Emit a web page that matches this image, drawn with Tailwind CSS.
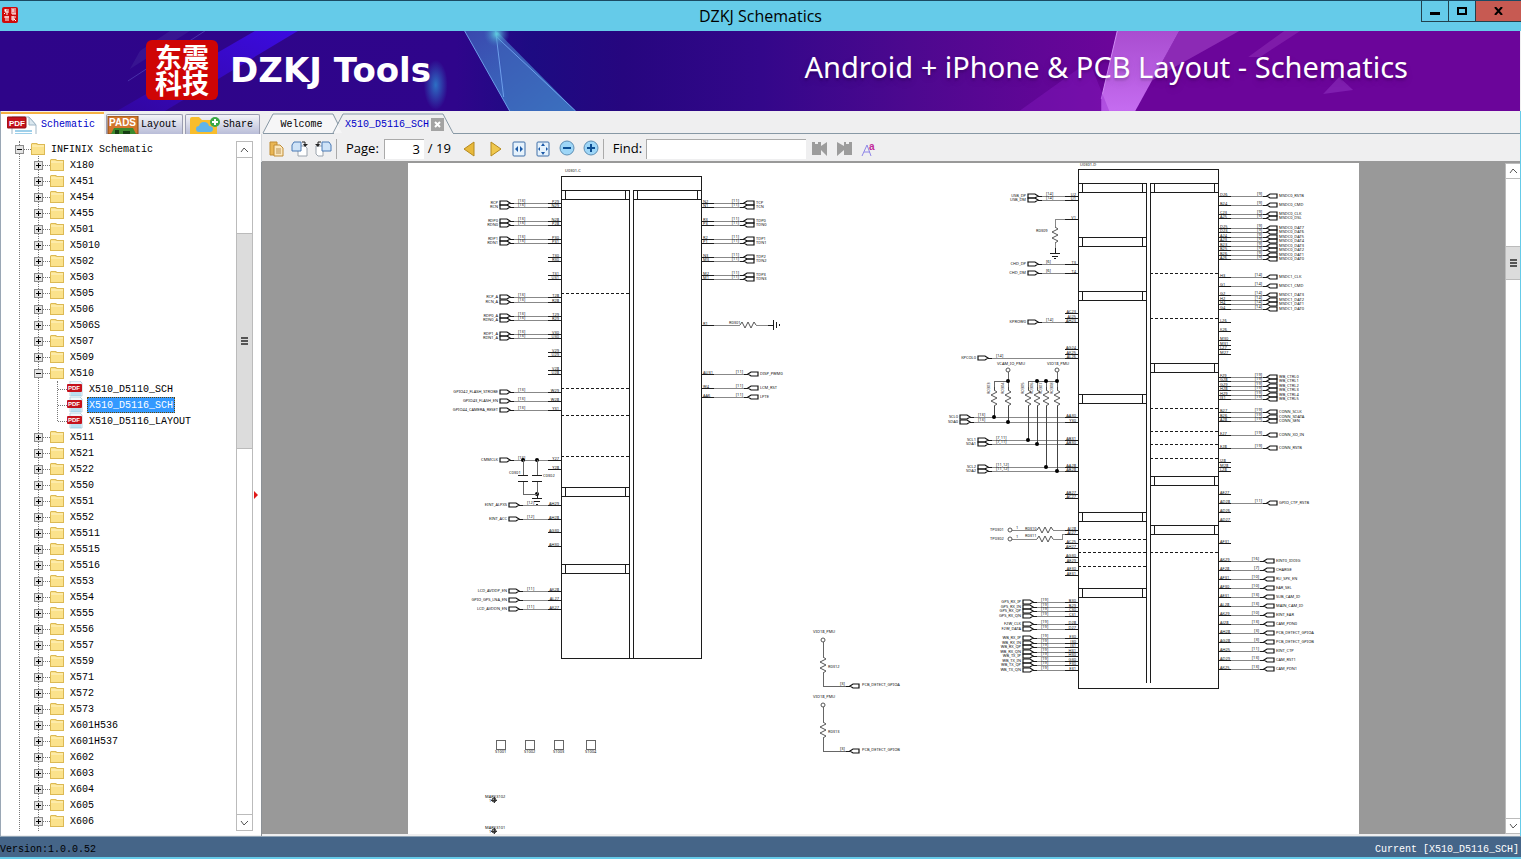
<!DOCTYPE html>
<html lang="en">
<head>
    <meta charset="UTF-8">
    <meta name="viewport" content="width=device-width, initial-scale=1.0">
    <title>DZKJ Schematics</title>
    <script src="https://cdn.jsdelivr.net/npm/@tailwindcss/browser@4"></script>
</head>
<body class="h-screen flex flex-col overflow-hidden bg-[#efeff0] text-black font-['Liberation_Mono',monospace] text-[10px]">

    <!-- Title bar -->
    <header class="relative h-[31px] shrink-0 flex items-center justify-center bg-[#65cbe9] border-t border-[#1b4a63]">
        <svg class="absolute left-[2px] top-[6px]" width="16" height="16" viewBox="0 0 16 16">
            <rect width="16" height="16" rx="2" fill="#cf0a0a"/>
            <path d="M2 3h5M4 2L3 5h4M5 4v4M3 6l-1 1M9 2h5M9 4h5M11 2v3M9 6h5M10 7h4M2 10h5M4 9v5M6 9v5M9 10h5M11 9v5M9 12h4M12 12l2 2" stroke="#fff" fill="none"/>
        </svg>
        <h1 class="font-['Open_Sans',sans-serif] text-[16px] leading-5 pb-px">DZKJ Schematics</h1>
        <div class="absolute right-0 top-0 flex h-[21px] border-b border-l border-[#22404c]">
            <button aria-label="Minimize" class="w-[27px] flex items-center justify-center border-r border-[#22404c]">
                <svg width="10" height="10"><rect y="6" width="10" height="3"/></svg>
            </button>
            <button aria-label="Maximize" class="w-[27px] flex items-center justify-center border-r border-[#22404c]">
                <svg width="10" height="8"><rect x="1" y="1" width="8" height="6" fill="none" stroke="#000" stroke-width="2"/></svg>
            </button>
            <button aria-label="Close" class="w-[45px] flex items-center justify-center bg-[#c75a52]">
                <svg width="9" height="8" viewBox="0 0 9 8"><path d="M1 0l7 8M8 0L1 8" stroke="#000" stroke-width="2"/></svg>
            </button>
        </div>
    </header>

    <!-- Banner -->
    <div class="relative h-20 shrink-0 flex items-center justify-between pl-[146px] pr-[112px] mr-px overflow-hidden text-white font-['Open_Sans',sans-serif]">
        <svg class="absolute inset-0 w-full h-full" viewBox="0 0 1521 80" preserveAspectRatio="none">
            <defs>
                <linearGradient id="bg">
                    <stop offset="0" stop-color="#2e0589"/>
                    <stop offset=".3" stop-color="#2f058b"/>
                    <stop offset=".35" stop-color="#1d0b82"/>
                    <stop offset=".41" stop-color="#26067f"/>
                    <stop offset=".5" stop-color="#33078a"/>
                    <stop offset=".6" stop-color="#4d088f"/>
                    <stop offset=".73" stop-color="#6b059a"/>
                    <stop offset="1" stop-color="#6b059a"/>
                </linearGradient>
                <linearGradient id="shard" x1="0" y1="0" x2="1" y2="1">
                    <stop offset="0" stop-color="#3a48ae"/>
                    <stop offset="1" stop-color="#3b7cc6"/>
                </linearGradient>
                <linearGradient id="pink" x1="0" y1="0" x2="0" y2="1">
                    <stop offset="0" stop-color="#a94dd0"/>
                    <stop offset="1" stop-color="#c56cf0"/>
                </linearGradient>
                <linearGradient id="beam" x1="1" y1="0" x2="0" y2="1">
                    <stop offset="0" stop-color="#3b0be0"/>
                    <stop offset="1" stop-color="#3206a0"/>
                </linearGradient>
                <radialGradient id="glow">
                    <stop offset="0" stop-color="#2d6fc4"/>
                    <stop offset="1" stop-color="#2d6fc4" stop-opacity="0"/>
                </radialGradient>
                <radialGradient id="spark">
                    <stop offset="0" stop-color="#5fd0e0"/>
                    <stop offset="1" stop-color="#3f70c0" stop-opacity="0"/>
                </radialGradient>
            </defs>
            <rect width="1521" height="80" fill="url(#bg)"/>
            <path d="M255 0h43L165 80h-48z" fill="url(#beam)"/>
            <path d="M128 50L205 0" stroke="#5b4fc0" opacity=".6"/>
            <path d="M140 20l30-20h20l-60 38z" fill="#452a9c" opacity=".4"/>
            <ellipse cx="436" cy="54" rx="12" ry="25" fill="url(#glow)"/>
            <path d="M465 0h32l79 80h-66z" fill="url(#shard)"/>
            <path d="M497 6l12 72 6 2h61z" fill="#3c63b8" opacity=".5"/>
            <path d="M465 0l45 80M496 0l8 66M496 5l80 75" stroke="#6d9fea" fill="none"/>
            <circle cx="497" cy="3" r="13" fill="url(#spark)"/>
            <path d="M1118 0h62l-44 80h-34v-12z" fill="url(#pink)"/>
            <path d="M1180 0h60l-68 38-20 12z" fill="#9a3bc0" opacity=".7"/>
            <path d="M1285 0h16l-40 26h-12z" fill="#9a3bc0" opacity=".4"/>
            <path d="M1340 46l14 13-30 4z" fill="#8c2fbe" opacity=".6"/>
            <path d="M1118 0l-16 68" stroke="#d08cf5"/>
            <path d="M1020 80l70-50 20 50z" fill="#8d20c8" opacity=".35"/>
        </svg>
        <div class="relative flex items-center gap-3 pb-[2px]">
            <div class="w-[72px] h-[60px] rounded-md bg-[#cf0505] flex flex-col items-center justify-center font-['Noto_Sans_CJK_SC',sans-serif] font-bold text-[27px] leading-[26px]">
                <p>东震<br>科技</p>
            </div>
            <strong class="font-['DejaVu_Sans',sans-serif] text-[34px] leading-[40px]">DZKJ Tools</strong>
        </div>
        <p class="relative pb-2 text-[29px] leading-[40px] whitespace-nowrap font-['Noto_Sans',sans-serif] text-shadow-lg">Android + iPhone &amp; PCB Layout - Schematics</p>
    </div>

    <main class="flex-1 min-h-0 flex border-r border-[#65cbe9]">

        <!-- Library -->
        <aside class="w-[262px] shrink-0 flex flex-col border-l border-[#9aa7b5]">
            <nav class="h-[23px] shrink-0 flex items-end gap-[2px] pt-px">
                <button class="w-[103px] h-full flex items-center gap-1 pl-[6px] bg-white border-t-2 border-[#f5b042] text-[#0000c8]">
                    <svg width="30" height="19" viewBox="0 0 30 19">
                        <path d="M5 19V2h17l7 8v9" fill="#fff" stroke="#9fb6c6"/>
                        <path d="M22 2v8h7z" fill="#dbe8ef" stroke="#9fb6c6"/>
                        <path d="M8 16h17M8 19h17" stroke="#9fd0ea" stroke-width="2"/>
                        <rect y="2" width="19" height="11" rx="1" fill="#c5121c" stroke="#8e0a12"/>
                        <text x="2" y="11" font-size="8" font-weight="700" fill="#fff" font-family="Liberation Sans">PDF</text>
                    </svg>
                    Schematic
                </button>
                <button class="w-[77px] h-5 flex items-center gap-[2px] border border-b-0 border-[#9a9cb0] rounded-t-xs bg-linear-to-b from-[#f4f4f8] to-[#b9bdd8]">
                    <svg width="32" height="18" viewBox="0 0 32 18">
                        <rect x="1" width="30" height="18" fill="#d3762d" stroke="#8a4a14"/>
                        <text x="2" y="10" font-size="10" font-weight="700" fill="#fff" font-family="Liberation Sans">PADS</text>
                        <path d="M4 18l3-6h19l3 6z" fill="#3c8a2e"/>
                        <path d="M8 18v-4h4v4M16 18v-3h7v3" fill="#173f14"/>
                    </svg>
                    Layout
                </button>
                <button class="w-[75px] h-5 flex items-center gap-[2px] pl-[3px] border border-b-0 border-[#9a9cb0] rounded-t-xs bg-linear-to-b from-[#f4f4f8] to-[#b9bdd8]">
                    <svg width="32" height="18" viewBox="0 0 32 18">
                        <path d="M1 18V3q0-2 2-2h7l3 3h15v14z" fill="#f8bd2c"/>
                        <path d="M10 16q-3 0-3-3t3-3q1-4 5-4t5 4q4 0 4 3t-3 3z" fill="#5fb4ea"/>
                        <circle cx="26" cy="6" r="5" fill="#3aa845"/>
                        <path d="M26 3v6M23 6h6" stroke="#fff" stroke-width="2"/>
                    </svg>
                    Share
                </button>
            </nav>
            <div class="flex-1 min-h-0 flex bg-white border-r border-[#d5d9dd] pt-[7px] pb-1 mb-px">
                <div class="relative flex-1 overflow-hidden">
                    <div class="absolute left-[18px] inset-y-0 border-l border-dotted border-[#777]"></div>
                    <div class="absolute left-[37px] top-3 bottom-0 border-l border-dotted border-[#777]"></div>
                    <ul id="tree" class="relative"></ul>
                </div>
                <div class="w-[17px] flex flex-col border border-[#bbb] mr-2">
                    <button aria-label="Scroll up" class="h-4 shrink-0 flex items-center justify-center border-b border-[#bbb]"><svg width="9" height="6"><path d="M1 5l3-4 4 4" fill="none" stroke="#555" stroke-width="1"/></svg></button>
                    <div class="h-[75px]"></div>
                    <div class="h-[216px] flex items-center justify-center bg-[#dcdcdc] border-y border-[#bbb]"><svg width="7" height="8" shape-rendering="crispEdges"><path d="M0 1h7M0 4h7M0 7h7" stroke="#555" stroke-width="2"/></svg></div>
                    <button aria-label="Scroll down" class="mt-auto h-4 shrink-0 flex items-center justify-center border-t border-[#bbb]"><svg width="9" height="6"><path d="M1 1l3 4 4-4" fill="none" stroke="#555" stroke-width="1"/></svg></button>
                </div>
            </div>
        </aside>

        <!-- Document -->
        <section class="relative flex-1 min-w-0 flex flex-col">
            <nav class="relative h-[23px] shrink-0 flex items-end bg-[#efeff0]">
                <svg class="absolute inset-0 w-full h-full">
                    <path d="M80 22L70 3H11L1 22z" fill="#f6f6f7"/>
                    <path d="M1 22L11 3h60l5 10M71 22L81 3h100l10 19" fill="none" stroke="#8798a5"/>
                    <path d="M1 22.5h71M191 22.5h3000" stroke="#8798a5"/>
                </svg>
                <button class="relative w-[79px] h-5">Welcome</button>
                <div class="relative h-5 flex items-center gap-[2px] pl-1">
                    <button class="text-[#0000c8]">X510_D5116_SCH</button>
                    <button aria-label="Close tab" class="size-[13px] bg-[#a3a3a3] flex items-center justify-center"><svg width="7" height="7"><path d="M1 1l5 5M6 1L1 6" stroke="#fff" stroke-width="2"/></svg></button>
                </div>
            </nav>

            <div class="h-[29px] shrink-0 flex items-center border-b-2 border-[#999] pl-[7px] pt-[2px] font-['Open_Sans',sans-serif] text-[13px]">
                <button aria-label="Save as" class="w-[15px]">
                    <svg width="15" height="16" viewBox="0 0 15 16"><path d="M1 1h7v13H1z" fill="#e9b654" stroke="#c08c35"/><path d="M5 4h6l3 3v8H5z" fill="#fbe7bd" stroke="#c08c35"/><path d="M7 8h5M7 10h5M7 12h5" stroke="#b99254"/></svg>
                </button>
                <button aria-label="Rotate right" class="ml-[7px]">
                    <svg width="17" height="16" viewBox="0 0 17 16"><path d="M7 5h7l2 2v8H7z" fill="#fff" stroke="#9aa3ad"/><path d="M1 4l2-3h7v9H1z" fill="#cfe3f7" stroke="#4a7ab5"/><path d="M11 1h3v2" fill="none" stroke="#222"/><path d="M12 3h5l-3 3z" fill="#222"/></svg>
                </button>
                <button aria-label="Rotate left" class="ml-[7px]">
                    <svg width="17" height="16" viewBox="0 0 17 16"><path d="M1 5h7v10H3l-2-2z" fill="#fff" stroke="#9aa3ad"/><path d="M7 1h7l2 3v6H7z" fill="#cfe3f7" stroke="#4a7ab5"/><path d="M6 1H3v2" fill="none" stroke="#222"/><path d="M0 3h5L3 6z" fill="#222"/></svg>
                </button>
                <span class="w-px h-5 bg-[#aaa] ml-1"></span>
                <label for="page" class="ml-[9px]">Page:</label>
                <input id="page" value="3" class="ml-[5px] w-[40px] h-5 bg-white border-t border-l border-[#aaa] text-right pr-1">
                <span class="ml-1 w-[31px] whitespace-nowrap">/ 19</span>
                <button aria-label="Previous page" class="ml-1"><svg width="12" height="16" viewBox="0 0 12 16"><path d="M11 1v14L1 8z" fill="#e8b93c" stroke="#b58a1e"/></svg></button>
                <button aria-label="Next page" class="ml-[15px]"><svg width="12" height="16" viewBox="0 0 12 16"><path d="M1 1v14l10-7z" fill="#f0c84e" stroke="#b58a1e"/></svg></button>
                <button aria-label="Fit width" class="ml-[10px]">
                    <svg width="14" height="16" viewBox="0 0 14 16"><rect x="1" y="1" width="12" height="14" rx="1" fill="#e6f2fc" stroke="#3f6ea8"/><path d="M6 5v6L3 8zM8 5v6l3-3z" fill="#1c5aa8"/></svg>
                </button>
                <button aria-label="Fit page" class="ml-[10px]">
                    <svg width="14" height="16" viewBox="0 0 14 16"><rect x="1" y="1" width="12" height="14" rx="1" fill="#e6f2fc" stroke="#3f6ea8"/><path d="M5 5h4L7 2zM5 11h4l-2 3zM4 6v4L2 8zM10 6v4l2-2z" fill="#1c5aa8"/></svg>
                </button>
                <button aria-label="Zoom out" class="ml-[9px]"><svg width="17" height="17" viewBox="0 0 17 17"><circle cx="8" cy="8" r="7" fill="#9ed6f7" stroke="#5f8fb5"/><path d="M4 8h8" stroke="#0d4f94" stroke-width="2"/></svg></button>
                <button aria-label="Zoom in" class="ml-[7px]"><svg width="17" height="17" viewBox="0 0 17 17"><circle cx="8" cy="8" r="7" fill="#9ed6f7" stroke="#5f8fb5"/><path d="M4 8h8M8 4v8" stroke="#0d4f94" stroke-width="2"/></svg></button>
                <span class="w-px h-5 bg-[#aaa] ml-[3px]"></span>
                <label for="find" class="ml-[9px]">Find:</label>
                <input id="find" class="ml-[4px] w-[160px] h-5 bg-white border-t border-l border-[#aaa]">
                <button aria-label="Find previous" class="ml-[6px]"><svg width="16" height="15" viewBox="0 0 16 15"><path d="M0 1h3v2h3V1h3v4l6-4v14L9 9v5H0z" fill="#9c9c9c"/></svg></button>
                <button aria-label="Find next" class="ml-[9px]"><svg width="16" height="15" viewBox="0 0 16 15"><path d="M15 1h-3v2H9V1H7v4L0 1v14l7-6v5h8z" fill="#9c9c9c"/></svg></button>
                <button aria-label="Match case" class="ml-2"><svg width="16" height="16" viewBox="0 0 16 16"><path d="M1 15L6 4l4 11M3 11h6" fill="none" stroke="#8f86e8" stroke-width="1"/><text x="8" y="9" font-size="10" fill="#c22a9a" font-family="Liberation Sans" font-weight="700">a</text></svg></button>
            </div>

            <div class="flex-1 min-h-0 flex bg-white mb-[2px]">
                <div class="flex-1 flex justify-center bg-[#999] overflow-hidden">
                    <div class="bg-white h-full shrink-0">
                        <svg id="sheet" width="951" height="671" viewBox="408 163 951 671" font-family="Noto Sans, sans-serif" font-size="4" fill="#111" shape-rendering="crispEdges"></svg>
                    </div>
                </div>
                <div class="w-[15px] shrink-0 flex flex-col border border-[#bbb] border-r-0">
                    <button aria-label="Page up" class="h-[15px] flex items-center justify-center border-b border-[#bbb]"><svg width="9" height="6"><path d="M1 5l3-4 4 4" fill="none" stroke="#555" stroke-width="1"/></svg></button>
                    <div class="h-[67px]"></div>
                    <div class="h-[34px] flex items-center justify-center bg-[#dcdcdc] border-y border-[#bbb]"><svg width="7" height="8" shape-rendering="crispEdges"><path d="M0 1h7M0 4h7M0 7h7" stroke="#555" stroke-width="2"/></svg></div>
                    <button aria-label="Page down" class="mt-auto h-[15px] flex items-center justify-center border-t border-[#bbb]"><svg width="9" height="6"><path d="M1 1l3 4 4-4" fill="none" stroke="#555" stroke-width="1"/></svg></button>
                </div>
            </div>

            <!-- Splitter handle and edge -->
            <div class="absolute -left-px top-[51px] bottom-0 border-l border-[#8c9196]"></div>
            <svg class="absolute -left-[9px] top-[379px]" width="6" height="10"><path d="M1 1v8l4-4z" fill="#e01818"/></svg>
        </section>
    </main>

    <!-- Status bar -->
    <footer class="h-[23px] shrink-0 flex items-center justify-between border-t border-b-2 border-t-[#8fa3b5] border-b-[#65cbe9] bg-[#456588] pr-[2px] pt-[5px]">
        <span>Version:1.0.0.52</span>
        <span class="text-white">Current [X510_D5116_SCH]</span>
    </footer>

    <script>
        // Library tree: models at the second level, X510 is open
        const models = [
            'X180', 'X451', 'X454', 'X455', 'X501', 'X5010', 'X502', 'X503', 'X505', 'X506', 'X506S', 'X507', 'X509', 'X510',
            'X511', 'X521', 'X522', 'X550', 'X551', 'X552', 'X5511', 'X5515', 'X5516', 'X553', 'X554', 'X555', 'X556', 'X557',
            'X559', 'X571', 'X572', 'X573', 'X601H536', 'X601H537', 'X602', 'X603', 'X604', 'X605', 'X606', ''
        ];
        const files = ['X510_D5110_SCH', 'X510_D5116_SCH', 'X510_D5116_LAYOUT'];
        const selected = 'X510_D5116_SCH';

        const toggle = open => `<svg class="shrink-0" width="9" height="9" shape-rendering="crispEdges"><rect width="9" height="9" fill="#8c8c8c"/><rect x="1" y="1" width="7" height="7" fill="#e4e4e4"/><rect x="2" y="4" width="5" height="1" fill="#000"/>${open ? '' : '<rect x="4" y="2" width="1" height="5" fill="#000"/>'}</svg>`;
        const dots = w => `<span class="${w} shrink-0 border-t border-dotted border-[#777]"></span>`;
        const folder = '<svg class="shrink-0" width="14" height="12" viewBox="0 0 14 12"><path d="M0 12V1l1-1h5l1 1h7v11z" fill="#dcb954"/><path d="M1 11V1h4l2 1h6v9z" fill="#fbe28c"/><path d="M1 3h12" stroke="#fff4c8"/></svg>';
        const pdf = '<svg class="shrink-0" width="16" height="16" viewBox="0 0 16 16"><path d="M3 0h10l2 2v13H3z" fill="#eef7fb" stroke="#b9d4e2"/><path d="M4 12h10M4 14h10" stroke="#86c5e4"/><rect y="3" width="15" height="8" rx="1" fill="#c5121c"/><text x="1" y="9" font-size="6" font-weight="700" fill="#fff" font-family="Liberation Sans">PDF</text></svg>';

        const row = (pad, parts, name) => {
            const mark = name === selected ? 'bg-[#3399ff] text-white outline-1 -outline-offset-1 outline-dotted outline-[#664400]' : '';
            return `<li class="h-4 flex items-center ${pad}">${parts}<span class="ml-1 px-[2px] pt-px h-4 leading-[15px] whitespace-nowrap ${mark}">${name}</span></li>`;
        };

        let html = row('pl-[14px]', toggle(true) + dots('w-[7px]') + folder, 'INFINIX Schematic');
        models.forEach(name => {
            html += row('pl-[33px]', toggle(name === 'X510') + dots('w-[7px]') + folder, name);
            if (name === 'X510') {
                html += '<li><ul class="relative"><li class="absolute left-[56px] top-0 h-10 border-l border-dotted border-[#777]"></li>';
                files.forEach(file => { html += row('pl-[57px]', dots('w-[9px]') + pdf, file); });
                html += '</ul></li>';
            }
        });
        document.getElementById('tree').innerHTML = html;

        // Schematic sheet
        const out = [];
        const line = (d, color = '#888', w = 1) => out.push(`<path d="${d}" fill="none" stroke="${color}" stroke-width="${w}"/>`);
        const label = (x, y, s, anchor = 'start') => out.push(`<text x="${x}" y="${y}" text-anchor="${anchor}">${s}</text>`);
        const dot = (x, y) => out.push(`<circle cx="${x}" cy="${y}" r="2" fill="#000" shape-rendering="auto"/>`);
        const ring = (x, y) => out.push(`<circle cx="${x}" cy="${y}" r="2" fill="#fff" stroke="#555" stroke-width="1" shape-rendering="auto"/>`);
        const port = d => out.push(`<path d="${d}" fill="none" stroke="#111" stroke-width="1.2" shape-rendering="auto"/>`);
        const INK = '#1c1c1c';

        // Bars are the boxed section titles, dashes the section dividers
        function column(x1, x2, bars, dashes) {
            bars.forEach(y => line(`M${x1} ${y}H${x2}V${y + 9}H${x1}zM${x1 + 4} ${y}v9M${x2 - 4} ${y}v9`, INK));
            dashes.forEach(y => out.push(`<path d="M${x1} ${y}H${x2}" stroke="${INK}" stroke-dasharray="3 2"/>`));
        }

        // Left-hand rows: port points right, wire runs to the chip edge
        function leftRows(edge, rows) {
            rows.forEach(([y, pin, px, name, ref]) => {
                line(`M${edge - 13} ${y}H${edge}`, INK);
                label(edge - 2, y, pin, 'end');
                if (!name) return;
                line(`M${px + 14} ${y}H${edge - 13}`);
                line(`M${px + 10} ${y}h4`, INK);
                port(`M${px} ${y - 2}h7l3 2l-3 2h-7z`);
                label(px - 2, y + 1, name, 'end');
                label(px + 18, y - 1, ref);
            });
        }

        // Right-hand rows mirror them
        function rightRows(edge, rows) {
            rows.forEach(([y, pin, px, name, ref]) => {
                line(`M${edge} ${y}h13`, INK);
                label(edge + 2, y, pin);
                if (!name) return;
                line(`M${edge + 13} ${y}H${px - 4}`);
                line(`M${px} ${y}h-4`, INK);
                port(`M${px + 10} ${y - 2}h-7l-3 2l3 2h7z`);
                label(px + 12, y + 1, name);
                label(px - 5, y - 1, ref, 'end');
            });
        }

        const zigV = (x, y) => out.push(`<path d="M${x} ${y}l3 2l-6 3l6 3l-6 3l6 3l-3 2" fill="none" stroke="#555" shape-rendering="auto"/>`);
        const zigH = (x, y) => out.push(`<path d="M${x} ${y}l2 -3l3 6l3 -6l3 6l3 -6l2 3" fill="none" stroke="#555" shape-rendering="auto"/>`);

        // Chip C
        label(565, 172, 'U0301-C');
        line('M561 176H701V658H561z', INK);
        line('M629 190V658M633 190V658', INK);
        column(561, 629, [190, 487, 564], [293, 388, 415, 456]);
        column(633, 701, [190], []);
        leftRows(561, [
            [203, 'P29', 500, 'RCP', '[13]'], [207, 'N29', 500, 'RCN', '[13]'],
            [221, 'N28', 500, 'RDP0', '[13]'], [225, 'P28', 500, 'RDN0', '[13]'],
            [239, 'P30', 500, 'RDP1', '[13]'], [243, 'P31', 500, 'RDN1', '[13]'],
            [257, 'T30'], [261, 'R30'], [275, 'T31'], [279, 'U31'],
            [297, 'T28', 500, 'RCP_A', '[13]'], [302, 'R28', 500, 'RCN_A', '[13]'],
            [316, 'T29', 500, 'RDP0_A', '[13]'], [320, 'R29', 500, 'RDN0_A', '[13]'],
            [334, 'V30', 500, 'RDP1_A', '[13]'], [338, 'U30', 500, 'RDN1_A', '[13]'],
            [352, 'V29'], [356, 'U29'], [370, 'V28'], [374, 'U28'],
            [392, 'W29', 500, 'GPIO42_FLASH_STROBE', '[13]'], [401, 'W28', 500, 'GPIO43_FLASH_EN', '[13]'], [410, 'Y31', 500, 'GPIO44_CAMERA_RESET', '[13]'],
            [460, 'Y27', 500, 'CMMCLK', '[13]'], [469, 'Y28'],
            [505, 'AH29', 509, 'EINT_ALPXS', '[12]'], [519, 'AH28', 509, 'EINT_ACC', '[12]'],
            [532, 'AG30'], [546, 'AH30'],
            [591, 'AK28', 509, 'LCD_AVDDP_EN', '[11]'], [600, 'AL27', 509, 'GPIO_GPS_LNA_EN', ''], [609, 'AK27', 509, 'LCD_AVDDN_EN', '[11]']
        ]);
        rightRows(701, [
            [203, 'N2', 744, 'TCP', '[11]'], [207, 'N1', 744, 'TCN', '[11]'],
            [221, 'R3', 744, 'TDP0', '[11]'], [225, 'P3', 744, 'TDN0', '[11]'],
            [239, 'R2', 744, 'TDP1', '[11]'], [243, 'P1', 744, 'TDN1', '[11]'],
            [257, 'N3', 744, 'TDP2', '[11]'], [261, 'M3', 744, 'TDN2', '[11]'],
            [275, 'M2', 744, 'TDP3', '[11]'], [279, 'M1', 744, 'TDN3', '[11]'],
            [325, 'R1'],
            [374, 'AU31', 748, 'DISP_PWM0', '[11]'], [388, 'W4', 748, 'LCM_RST', '[11]'], [397, 'AA6', 748, 'LPTE', '[11]']
        ]);
        line('M714 325H740M756 325H768');
        zigH(740, 325);
        line('M768 325h5M773 320v10M776 322v6M779 324v2', INK);
        label(729, 324, 'R0301');
        dot(523, 460);
        dot(537, 460);
        dot(537, 494);
        line('M523 460V475M537 460V475M523 481V494H537M537 481V494', '#666');
        line('M518 475h10M518 481h10M532 475h10M532 481h10M537 494v4M532 498h10M534 501h6M536 504h2', INK);
        label(509, 474, 'C0301');
        label(543, 477, 'C0302');

        // Chip D
        label(1080, 166, 'U0301-D');
        line('M1078 169H1218V688H1078z', INK);
        line('M1146 183V683M1150 183V683', INK);
        column(1078, 1146, [183, 237, 291, 394, 512, 588], [539, 552, 566]);
        column(1150, 1218, [183, 363, 476, 525], [273, 318, 408, 431, 444, 458, 552]);
        leftRows(1078, [
            [196, 'U2', 1028, 'USB_DP', '[14]'], [200, 'U1', 1028, 'USB_DM', '[14]'], [219, 'V1'],
            [264, 'T3', 1028, 'CHD_DP', '[6]'], [273, 'T4', 1028, 'CHD_DM', '[6]'],
            [313, 'AC23'], [318, 'AJ25'], [322, 'AH23', 1028, 'KPROW0', '[14]'],
            [349, 'AG24'], [354, 'AK25'], [358, 'AL26', 978, 'KPCOL0', '[14]'],
            [417, 'AA30', 960, 'SCL0', '[13]'], [422, 'Y30', 960, 'SDA0', '[13]'],
            [440, 'AB31', 978, 'SCL1', '[7,11]'], [444, 'AB30', 978, 'SDA1', '[7,11]'],
            [467, 'AA28', 978, 'SCL2', '[11,12]'], [471, 'AB28', 978, 'SDA2', '[11,12]'],
            [494, 'AB27'], [498, 'AC27'], [530, 'AJ28'], [534, 'AJ27'], [543, 'AC25'], [548, 'AH27'],
            [557, 'AG30'], [562, 'AE29'], [570, 'AE30'], [575, 'AE31'],
            [602, 'B30', 1023, 'GPS_RX_IP', '[19]'], [607, 'B29', 1023, 'GPS_RX_IN', '[19]'], [611, 'C30', 1023, 'GPS_RX_QP', '[19]'], [616, 'C31', 1023, 'GPS_RX_QN', '[19]'],
            [624, 'D28', 1023, 'F2W_CLK', '[19]'], [629, 'D27', 1023, 'F2W_DATA', '[19]'],
            [638, 'E30', 1023, 'WB_RX_IP', '[19]'], [643, 'J30', 1023, 'WB_RX_IN', '[19]'], [647, 'J31', 1023, 'WB_RX_QP', '[19]'], [652, 'H31', 1023, 'WB_RX_QN', '[19]'],
            [656, 'H30', 1023, 'WB_TX_IP', '[19]'], [661, 'G30', 1023, 'WB_TX_IN', '[19]'], [665, 'F30', 1023, 'WB_TX_QP', '[19]'], [670, 'E31', 1023, 'WB_TX_QN', '[19]']
        ]);
        rightRows(1218, [
            [196, 'D26', 1267, 'MSDC0_RSTB', '[9]'], [205, 'B24', 1267, 'MSDC0_CMD', '[9]'], [214, 'C23', 1267, 'MSDC0_CLK', '[9]'], [218, 'A25', 1267, 'MSDC0_DSL', '[9]'],
            [228, 'D25', 1267, 'MSDC0_DAT7', '[9]'], [232, 'D23', 1267, 'MSDC0_DAT6', '[9]'], [237, 'A24', 1267, 'MSDC0_DAT5', '[9]'], [241, 'A23', 1267, 'MSDC0_DAT4', '[9]'],
            [246, 'B23', 1267, 'MSDC0_DAT3', '[9]'], [250, 'B25', 1267, 'MSDC0_DAT2', '[9]'], [255, 'B26', 1267, 'MSDC0_DAT1', '[9]'], [259, 'A26', 1267, 'MSDC0_DAT0', '[9]'],
            [277, 'H3', 1267, 'MSDC1_CLK', '[14]'], [286, 'G1', 1267, 'MSDC1_CMD', '[14]'],
            [295, 'G2', 1267, 'MSDC1_DAT3', '[14]'], [300, 'H2', 1267, 'MSDC1_DAT2', '[14]'], [304, 'H4', 1267, 'MSDC1_DAT1', '[14]'], [309, 'G4', 1267, 'MSDC1_DAT0', '[14]'],
            [322, 'L26'], [331, 'K26'], [340, 'M30'], [345, 'M31'], [349, 'L27'], [354, 'M27'],
            [377, 'F29', 1267, 'WB_CTRL0', '[19]'], [381, 'G28', 1267, 'WB_CTRL1', '[19]'], [386, 'G29', 1267, 'WB_CTRL2', '[19]'], [390, 'H28', 1267, 'WB_CTRL3', '[19]'], [395, 'H29', 1267, 'WB_CTRL4', '[19]'], [399, 'J31', 1267, 'WB_CTRL5', '[19]'],
            [412, 'B27', 1267, 'CONN_SCLK', '[19]'], [417, 'B26', 1267, 'CONN_SDATA', '[19]'], [421, 'A28', 1267, 'CONN_SEN', '[19]'],
            [435, 'E27', 1267, 'CONN_XO_IN', '[19]'], [448, 'E28', 1267, 'CONN_RSTB', '[19]'],
            [462, 'J28'], [467, 'M28'], [471, 'L28'], [494, 'AE27'], [503, 'AD28', 1267, 'GPIO_CTP_RSTB', '[11]'], [512, 'AD26'], [521, 'AD27'], [543, 'AF31'],
            [561, 'AK29', 1264, 'EINT0_IDDIG', '[16]'], [570, 'AF28', 1264, 'CHARGE', '[7]'], [579, 'AF31', 1264, 'RU_SPK_EN', '[10]'], [588, 'AF30', 1264, 'EAR_SEL', '[10]'],
            [597, 'AE31', 1264, 'SUB_CAM_ID', '[13]'], [606, 'AL28', 1264, 'MAIN_CAM_ID', '[13]'], [615, 'AK29', 1264, 'EINT_EAR', '[10]'], [624, 'AJ28', 1264, 'CAM_PDN0', '[13]'],
            [633, 'AH28', 1264, 'PCB_DETECT_GPIOA', '[3]'], [642, 'AG28', 1264, 'PCB_DETECT_GPIOB', '[3]'], [651, 'AH25', 1264, 'EINT_CTP', '[11]'], [660, 'AD29', 1264, 'CAM_RST1', '[13]'], [669, 'AK25', 1264, 'CAM_PDN1', '[13]']
        ]);
        line('M1065 219H1055V227M1055 243V248');
        zigV(1055, 227);
        line('M1055 248v5M1050 253h10M1052 256h6M1054 258h2', INK);
        label(1036, 232, 'R0309');

        // Pull-ups
        label(997, 365, 'VCAM_IO_PMU');
        label(1047, 365, 'VIO18_PMU');
        line('M1008 372V387M1057 372V387M994 387V381H1008M1028 387V381H1057M1037 381V387M1046 381V387', '#666');
        [[994, 417, 'R0303'], [1008, 422, 'R0304'], [1028, 440, 'R0305'], [1037, 444, 'R0306'], [1046, 467, 'R0307'], [1057, 471, 'R0308']].forEach(([x, y, name]) => {
            zigV(x, 390);
            line(`M${x} 387v3M${x} 406V${y}`, '#444');
            dot(x, y);
            out.push(`<text transform="translate(${x - 4} 394) rotate(-90)">${name}</text>`);
        });
        [1008, 1037, 1046, 1057].forEach(x => dot(x, 381));
        ring(1008, 370);
        ring(1057, 370);

        // Test points
        line('M1012 530H1037M1053 530H1065M1012 539H1037M1053 539H1062V534H1065');
        zigH(1037, 530);
        zigH(1037, 539);
        ring(1010, 530);
        ring(1010, 539);
        label(990, 531, 'TP0301');
        label(990, 540, 'TP0302');
        label(1016, 529, '1');
        label(1016, 538, '1');
        label(1025, 530, 'R0310');
        label(1025, 537, 'R0311');

        // PCB detect straps
        [[640, 'R0312', 'PCB_DETECT_GPIOA'], [705, 'R0313', 'PCB_DETECT_GPIOB']].forEach(([y, res, net]) => {
            label(813, y - 7, 'VIO18_PMU');
            line(`M823 ${y + 2}V${y + 17}M823 ${y + 33}V${y + 46}H846`, '#666');
            zigV(823, y + 17);
            ring(823, y);
            line(`M850 ${y + 46}h-4`, INK);
            port(`M859 ${y + 44}h-6l-3 2l3 2h6z`);
            label(828, y + 28, res);
            label(840, y + 45, '[3]');
            label(862, y + 46, net);
        });

        // Shield pads and fiducials
        [[496, 'S1001'], [525, 'S1002'], [554, 'S1003'], [586, 'S1004']].forEach(([x, name]) => {
            line(`M${x} 740h9v9h-9z`, '#666');
            label(x - 1, 753, name);
        });
        [[800, 'MARK3102'], [831, 'MARK3101']].forEach(([y, name]) => {
            label(485, y - 2, name);
            label(489, y + 2, '1');
            out.push(`<circle cx="494" cy="${y}" r="2" fill="#999" stroke="#333" shape-rendering="auto"/>`);
            line(`M491 ${y}h6M494 ${y - 3}v6`, '#333');
        });
        document.getElementById('sheet').innerHTML = out.join('');
    </script>
</body>
</html>
